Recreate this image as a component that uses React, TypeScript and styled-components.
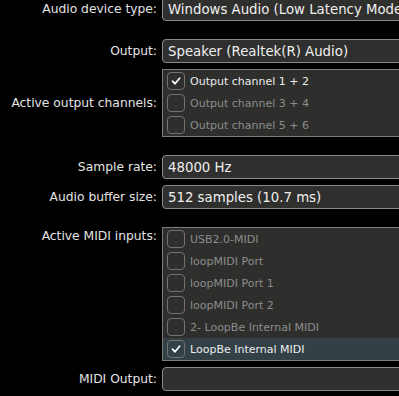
import React from "react";
import styled, { createGlobalStyle } from "styled-components";

const Global = createGlobalStyle`
  html, body { margin: 0; padding: 0; background: #000; overflow: hidden; }
  body { font-family: "DejaVu Sans", Verdana, sans-serif; }
`;

const Form = styled.div`
  display: flex;
  flex-direction: column;
  gap: 6px;
  margin-top: -3px;
  width: 470px;
`;

const Row = styled.div<{ $spaced?: boolean; $top?: boolean }>`
  display: flex;
  align-items: ${(p) => (p.$top ? "flex-start" : "center")};
  margin-top: ${(p) => (p.$spaced ? "12px" : "0")};
`;

const Label = styled.div<{ $top?: boolean }>`
  width: 157px;
  flex-shrink: 0;
  margin-right: 5px;
  text-align: right;
  color: #e4e4e4;
  font-size: 12.3px;
  line-height: 16px;
  white-space: nowrap;
  padding-top: ${(p) => (p.$top ? "1px" : "0")};
`;

const Combo = styled.div`
  box-sizing: border-box;
  width: 300px;
  height: 24px;
  border: 1px solid #8c8c8c;
  border-radius: 4px;
  background: #2f2f2d;
  color: #f0f0f0;
  font-size: 13.3px;
  padding-left: 5px;
  display: flex;
  align-items: center;
  white-space: nowrap;
  overflow: hidden;
`;

const ListBox = styled.div`
  box-sizing: border-box;
  width: 300px;
  border: 1px solid #7c7c7c;
  background: #2e2e2c;
  display: flex;
  flex-direction: column;
`;

const Item = styled.div<{ $checked?: boolean; $highlight?: boolean }>`
  height: 22px;
  display: flex;
  align-items: center;
  gap: 5px;
  padding-left: 4px;
  background: ${(p) => (p.$highlight ? "#334045" : "transparent")};
  color: ${(p) => (p.$checked ? "#ececec" : "#8c8c8c")};
  font-size: 11px;
  white-space: nowrap;
`;

const Box = styled.div`
  box-sizing: border-box;
  width: 18px;
  height: 18px;
  border: 1px solid #727272;
  border-radius: 4px;
  display: flex;
  align-items: center;
  justify-content: center;
`;

const Check = () => (
  <svg width="10" height="10" viewBox="0 0 10 10">
    <polyline
      points="1.5,5.2 4,7.8 8.6,2.2"
      fill="none"
      stroke="#ffffff"
      strokeWidth="1.7"
      strokeLinecap="round"
      strokeLinejoin="round"
    />
  </svg>
);

type Opt = { name: string; checked?: boolean; highlight?: boolean };

const CheckList = ({ items }: { items: Opt[] }) => (
  <ListBox>
    {items.map((it) => (
      <Item key={it.name} $checked={it.checked} $highlight={it.highlight}>
        <Box>{it.checked && <Check />}</Box>
        {it.name}
      </Item>
    ))}
  </ListBox>
);

const outputs: Opt[] = [
  { name: "Output channel 1 + 2", checked: true },
  { name: "Output channel 3 + 4" },
  { name: "Output channel 5 + 6" },
];

const midi: Opt[] = [
  { name: "USB2.0-MIDI" },
  { name: "loopMIDI Port" },
  { name: "loopMIDI Port 1" },
  { name: "loopMIDI Port 2" },
  { name: "2- LoopBe Internal MIDI" },
  { name: "LoopBe Internal MIDI", checked: true, highlight: true },
];

export default function App() {
  return (
    <>
      <Global />
      <Form>
        <Row>
          <Label>Audio device type:</Label>
          <Combo>Windows Audio (Low Latency Mode)</Combo>
        </Row>
        <Row $spaced>
          <Label>Output:</Label>
          <Combo>Speaker (Realtek(R) Audio)</Combo>
        </Row>
        <Row>
          <Label>Active output channels:</Label>
          <CheckList items={outputs} />
        </Row>
        <Row $spaced>
          <Label>Sample rate:</Label>
          <Combo>48000 Hz</Combo>
        </Row>
        <Row>
          <Label>Audio buffer size:</Label>
          <Combo>512 samples (10.7 ms)</Combo>
        </Row>
        <Row $spaced $top>
          <Label $top>Active MIDI inputs:</Label>
          <CheckList items={midi} />
        </Row>
        <Row>
          <Label>MIDI Output:</Label>
          <Combo />
        </Row>
      </Form>
    </>
  );
}
